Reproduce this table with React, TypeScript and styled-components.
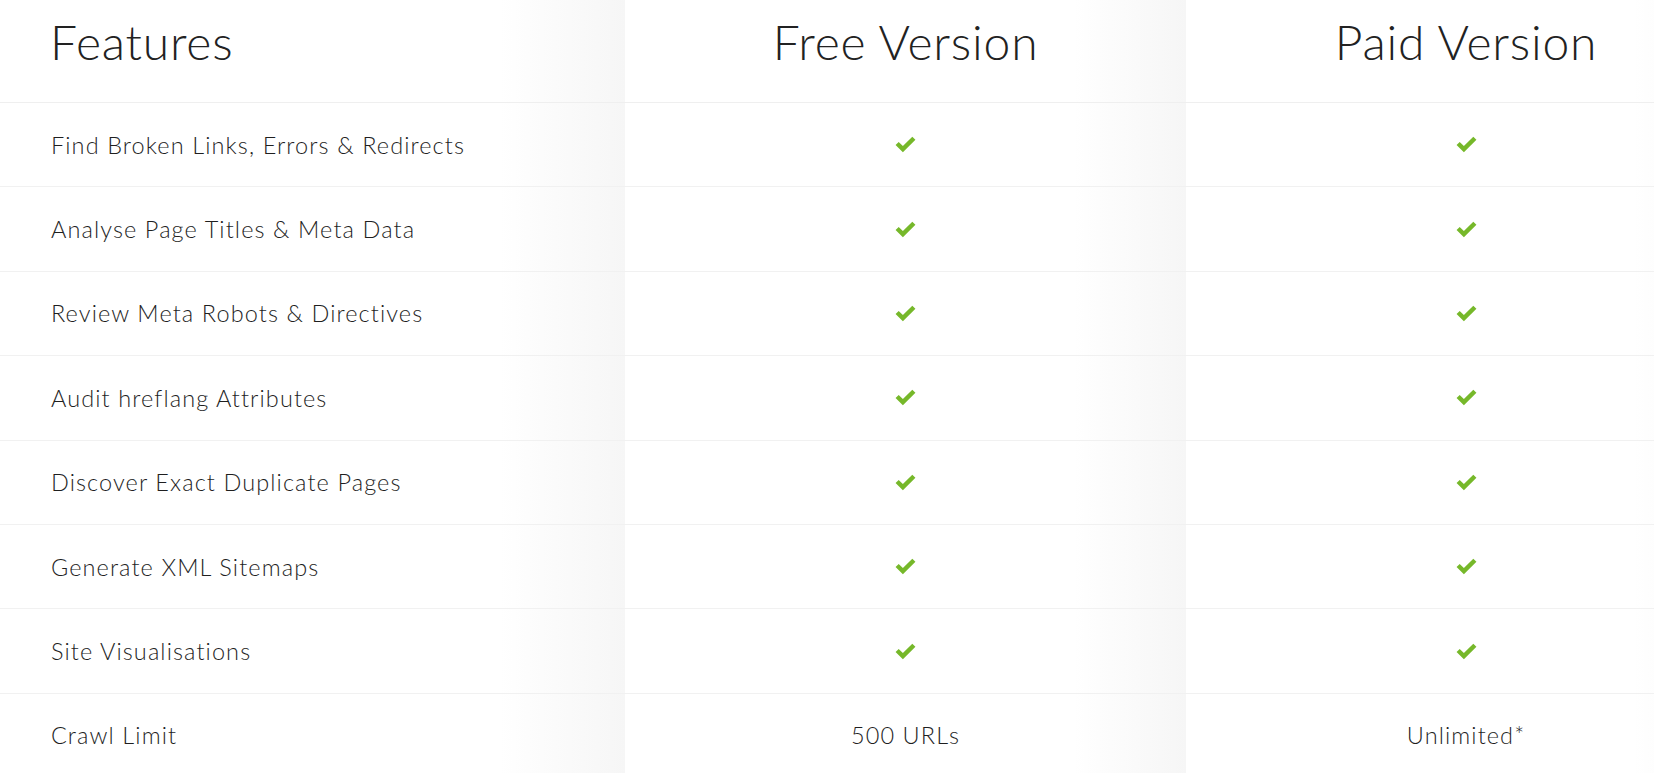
import React from "react";
import styled, { createGlobalStyle } from "styled-components";

const Global = createGlobalStyle`
  html, body { margin: 0; padding: 0; background: #fff; overflow: hidden; }
  body { font-family: Lato, "Open Sans", sans-serif; color: #2b2b2b; }
`;

const Table = styled.div`
  display: grid;
  grid-template-columns: 625px 561px 560px;
  width: 1746px;
`;

const Column = styled.div<{ $shade?: boolean }>`
  display: flex;
  flex-direction: column;
  background: ${(p) =>
    p.$shade
      ? "linear-gradient(to right, #ffffff 0%, #ffffff 80%, #f6f6f6 100%)"
      : "#ffffff"};
`;

const HeadCell = styled.div<{ $align: "left" | "center" }>`
  height: 103px;
  box-sizing: border-box;
  display: flex;
  align-items: center;
  justify-content: ${(p) => (p.$align === "left" ? "flex-start" : "center")};
  padding-left: ${(p) => (p.$align === "left" ? "50px" : "0")};
  padding-bottom: 20px;
  font-size: 48px;
  font-weight: 300;
  letter-spacing: 0.8px;
  color: #222;
  border-bottom: 1px solid #efefef;
`;

const Cell = styled.div<{ $align: "left" | "center" }>`
  height: 84.4px;
  box-sizing: border-box;
  display: flex;
  align-items: center;
  justify-content: ${(p) => (p.$align === "left" ? "flex-start" : "center")};
  padding-left: ${(p) => (p.$align === "left" ? "51px" : "0")};
  font-size: 23.5px;
  font-weight: 300;
  letter-spacing: 1.1px;
  color: #1f1f1f;
  border-bottom: 1px solid #f1f1f1;
`;

const Check = () => (
  <svg width="23" height="19" viewBox="0 0 22 18" aria-hidden>
    <path d="M1.5 9.5 L4.5 6.5 L8.5 10.5 L17.5 1.5 L20.5 4.5 L8.5 16.5 Z" fill="#76b82a" />
  </svg>
);

type Row = { name: string; free: React.ReactNode; paid: React.ReactNode };

const rows: Row[] = [
  { name: "Find Broken Links, Errors & Redirects", free: <Check />, paid: <Check /> },
  { name: "Analyse Page Titles & Meta Data", free: <Check />, paid: <Check /> },
  { name: "Review Meta Robots & Directives", free: <Check />, paid: <Check /> },
  { name: "Audit hreflang Attributes", free: <Check />, paid: <Check /> },
  { name: "Discover Exact Duplicate Pages", free: <Check />, paid: <Check /> },
  { name: "Generate XML Sitemaps", free: <Check />, paid: <Check /> },
  { name: "Site Visualisations", free: <Check />, paid: <Check /> },
  { name: "Crawl Limit", free: "500 URLs", paid: "Unlimited*" },
];

export default function App() {
  return (
    <>
      <Global />
      <Table>
        <Column $shade>
          <HeadCell $align="left">Features</HeadCell>
          {rows.map((r) => (
            <Cell key={r.name} $align="left">{r.name}</Cell>
          ))}
        </Column>
        <Column $shade>
          <HeadCell $align="center">Free Version</HeadCell>
          {rows.map((r) => (
            <Cell key={r.name} $align="center">{r.free}</Cell>
          ))}
        </Column>
        <Column $shade>
          <HeadCell $align="center">Paid Version</HeadCell>
          {rows.map((r) => (
            <Cell key={r.name} $align="center">{r.paid}</Cell>
          ))}
        </Column>
      </Table>
    </>
  );
}
